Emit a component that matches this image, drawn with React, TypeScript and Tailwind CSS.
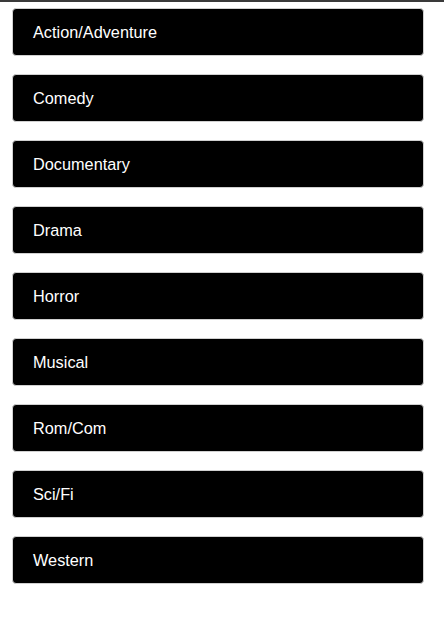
const genres = [
  'Action/Adventure',
  'Comedy',
  'Documentary',
  'Drama',
  'Horror',
  'Musical',
  'Rom/Com',
  'Sci/Fi',
  'Western',
];

export default function App() {
  return (
    <div className="min-h-[621px] bg-white font-['Liberation_Sans',Arial,sans-serif]">
      <div className="h-[2px] bg-[#3a3a3a]" />
      <div className="flex flex-col gap-[18px] pl-3 pr-5 pt-[6px]">
        {genres.map((g) => (
          <button
            key={g}
            className="h-12 w-full rounded border border-[#d0d0d0] bg-black px-5 pt-[1px] text-left text-[16.3px] text-white"
          >
            {g}
          </button>
        ))}
      </div>
    </div>
  );
}
